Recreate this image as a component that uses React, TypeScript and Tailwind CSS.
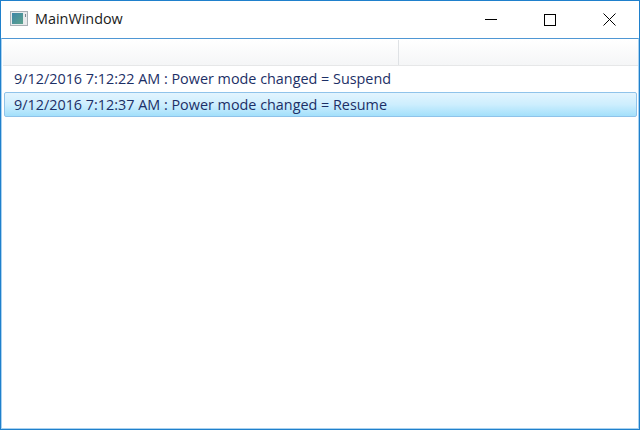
const font = "font-['Open_Sans','Noto_Sans',sans-serif]";

function AppIcon() {
  return (
    <svg width="18" height="15" viewBox="0 0 18 15" className="block">
      <defs>
        <linearGradient id="pane" x1="0" y1="0" x2="1" y2="1">
          <stop offset="0" stopColor="#3d86a8" />
          <stop offset="1" stopColor="#5da28c" />
        </linearGradient>
      </defs>
      <rect x="0.5" y="0.5" width="17" height="14" fill="#e8eaec" stroke="#a9b0b6" />
      <rect x="2" y="2" width="11" height="11" fill="url(#pane)" />
      <rect x="15" y="3" width="1" height="3" fill="#7b8790" />
    </svg>
  );
}

function TitleBar() {
  return (
    <div className="flex h-[37px] shrink-0 items-center bg-white">
      <div className="ml-[9px] mt-[-2px]"><AppIcon /></div>
      <div className={`ml-[7px] mt-[-1px] text-[14.4px] text-[#1a1a1a] ${font}`}>MainWindow</div>
      <div className="ml-auto flex h-full items-center">
        <div className="flex w-[58px] justify-center pr-[2px]">
          <div className="h-px w-[12px] bg-black" />
        </div>
        <div className="flex w-[59px] justify-center pr-[2px]">
          <div className="h-[12px] w-[12px] border border-black" />
        </div>
        <div className="flex w-[59px] justify-center">
          <svg width="13" height="13" viewBox="0 0 13 13">
            <path d="M0.5 0.5L12.5 12.5M12.5 0.5L0.5 12.5" stroke="#000" strokeWidth="1" fill="none" />
          </svg>
        </div>
      </div>
    </div>
  );
}

export default function App() {
  return (
    <div className="flex h-[430px] w-[640px] flex-col overflow-hidden border border-[#1f80cc] bg-white">
      <TitleBar />
      <div className="flex flex-1 flex-col border-x border-b border-t border-[#a9d2f0] border-t-[#4f97d4] pl-px">
        {/* column header */}
        <div className="mt-px flex h-[26px] shrink-0 border-b border-[#e6e7e8] bg-gradient-to-b from-white to-[#f5f6f7] pr-[1px]">
          <div className="w-[396px] border-r border-[#dfe2e5]" />
          <div className="flex-1" />
        </div>
        <div className={`flex flex-col pl-[1px] pr-[1px] text-[14.38px] text-[#1c2f66] ${font}`}>
          <div className="flex h-[25px] items-center pl-[10px]">9/12/2016 7:12:22 AM : Power mode changed = Suspend</div>
          <div className="mt-px flex h-[25px] items-center rounded-[2px] border border-[#8fc3ea] bg-gradient-to-b from-[#e3f4fe] from-0% via-[#cdeefe] via-50% to-[#a3e0fb] to-100% pl-[9px]">
            9/12/2016 7:12:37 AM : Power mode changed = Resume
          </div>
        </div>
      </div>
    </div>
  );
}
